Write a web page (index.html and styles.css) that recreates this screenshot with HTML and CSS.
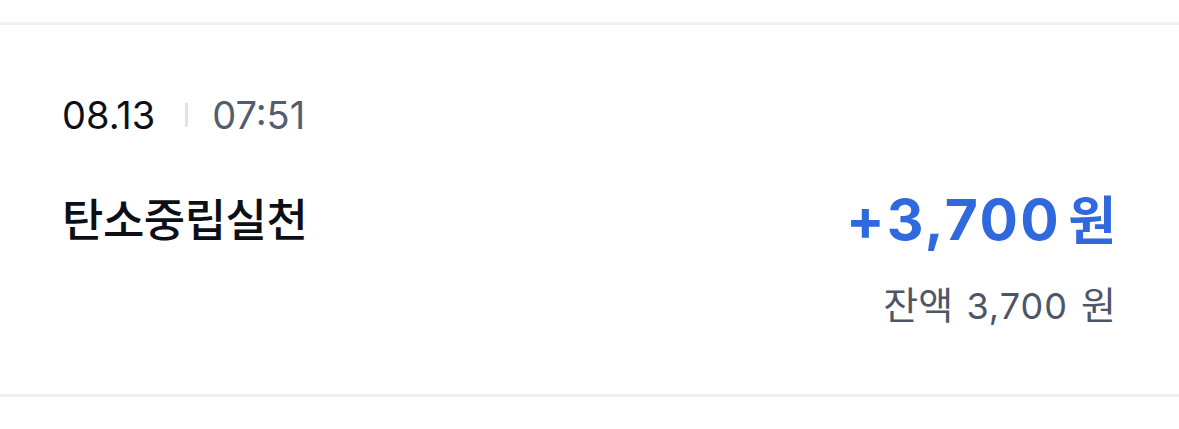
FILE: index.html
```html
<!DOCTYPE html>
<html lang="ko">
<head>
<meta charset="utf-8">
<link rel="stylesheet" href="styles.css">
</head>
<body>
<div class="divider top"></div>
<section class="item">
  <div class="meta">
    <span class="date">08.13</span>
    <span class="sep"></span>
    <span class="time">07:51</span>
  </div>
  <div class="row">
    <div class="title">탄소중립실천</div>
    <div class="amounts">
      <div class="amount">+3,700<span class="won">원</span></div>
      <div class="balance"><span class="ko">잔액</span> 3,700 <span class="ko">원</span></div>
    </div>
  </div>
</section>
<div class="divider bottom"></div>
</body>
</html>
```
FILE: styles.css
```css
html, body {
  margin: 0;
  padding: 0;
  background: #ffffff;
  font-family: Inter, "Noto Sans CJK KR", sans-serif;
}
.divider {
  height: 3px;
  background: #eef0f4;
}
.divider.top {
  margin-top: 22px;
}
.item {
  padding: 67px 63px 0 62px;
  height: 369px;
  box-sizing: border-box;
}
.meta {
  display: flex;
  align-items: center;
  height: 46px;
  font-size: 38px;
}
.date {
  color: #0d0f17;
}
.sep {
  width: 3px;
  height: 24px;
  background: #e0e3ea;
  margin: 0 24px 0 30px;
}
.time {
  color: #555c6c;
}
.row {
  display: flex;
  justify-content: space-between;
  align-items: flex-start;
  margin-top: 50px;
}
.title {
  font-family: "Noto Sans CJK KR", sans-serif;
  font-size: 45px;
  font-weight: 500;
  color: #0d0f17;
  line-height: 60px;
  letter-spacing: -0.5px;
}
.amounts {
  display: flex;
  flex-direction: column;
  align-items: flex-end;
}
.amount {
  font-size: 57px;
  font-weight: 700;
  color: #3068de;
  line-height: 60px;
  letter-spacing: 2.4px;
}
.won {
  font-family: "Noto Sans CJK KR", sans-serif;
  margin-left: 7px;
  font-size: 52px;
  letter-spacing: 0;
}
.balance {
  margin-top: 35px;
  font-size: 36px;
  color: #4e5567;
  line-height: 40px;
  letter-spacing: 1px;
  word-spacing: 2px;
}
.balance .ko {
  font-size: 38px;
  letter-spacing: 0;
}
```
